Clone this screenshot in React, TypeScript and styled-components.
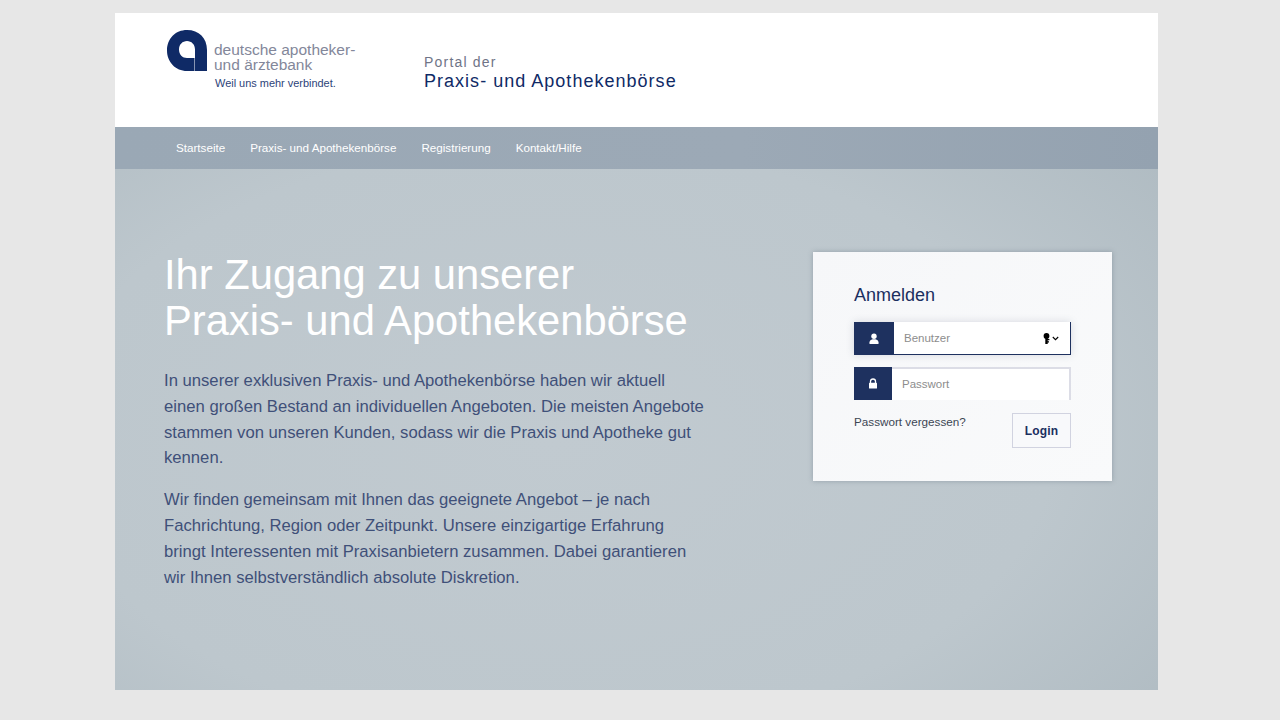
import React from "react";
import styled, { createGlobalStyle } from "styled-components";

const GlobalStyle = createGlobalStyle`
  html, body {
    margin: 0;
    padding: 0;
    background: #e7e7e7;
    font-family: "Liberation Sans", Arial, sans-serif;
  }
`;

const App = () => (
  <>
    <GlobalStyle />
    <Page>
      <Header>
        <Logo>
          <LogoMark viewBox="0 0 41 41" aria-hidden="true">
            <path
              fillRule="evenodd"
              fill="#0f2a66"
              d="M20 0C32 0 40 8 40 20V41H20C8.500 41 0 32 0 20.500C0 8.500 8.500 0 20 0ZM20 11C15.500 11 12 14.500 12 19.500C12 24.500 15.500 28 20 28H27.500V41H28V19.500C28 14.500 24.500 11 20 11Z"
            />
          </LogoMark>
          <LogoText>
            <BankName>
              deutsche apotheker-
              <br />
              und ärztebank
            </BankName>
            <Claim>Weil uns mehr verbindet.</Claim>
          </LogoText>
        </Logo>
        <PortalTitle>
          <PortalLabel>Portal der</PortalLabel>
          <PortalName>Praxis- und Apothekenbörse</PortalName>
        </PortalTitle>
      </Header>

      <Nav>
        <NavLink>Startseite</NavLink>
        <NavLink>Praxis- und Apothekenbörse</NavLink>
        <NavLink>Registrierung</NavLink>
        <NavLink>Kontakt/Hilfe</NavLink>
      </Nav>

      <Main>
        <Intro>
          <Headline>
            Ihr Zugang zu unserer
            <br />
            Praxis- und Apothekenbörse
          </Headline>
          <Copy>
            In unserer exklusiven Praxis- und Apothekenbörse haben wir aktuell
            <br />
            einen großen Bestand an individuellen Angeboten. Die meisten Angebote
            <br />
            stammen von unseren Kunden, sodass wir die Praxis und Apotheke gut
            <br />
            kennen.
          </Copy>
          <Copy>
            Wir finden gemeinsam mit Ihnen das geeignete Angebot – je nach
            <br />
            Fachrichtung, Region oder Zeitpunkt. Unsere einzigartige Erfahrung
            <br />
            bringt Interessenten mit Praxisanbietern zusammen. Dabei garantieren
            <br />
            wir Ihnen selbstverständlich absolute Diskretion.
          </Copy>
        </Intro>

        <LoginCard>
          <CardTitle>Anmelden</CardTitle>
          <UserField>
            <FieldIcon $wide>
              <svg width="12" height="12" viewBox="0 0 12 12" aria-hidden="true">
                <circle cx="6" cy="3.200" r="2.700" fill="#fff" />
                <path d="M1.500 11V9.300C1.500 7.600 3 6.600 4.500 6.200H7.500C9 6.600 10.500 7.600 10.500 9.300V11Z" fill="#fff" />
              </svg>
            </FieldIcon>
            <FieldInput placeholder="Benutzer" readOnly />
            <KeyMenu>
              <svg width="8" height="11" viewBox="0 0 8 11" aria-hidden="true">
                <circle cx="3.500" cy="2.900" r="2.900" fill="#000" />
                <path d="M2.300 4H4.700V6H6.400V7.300H4.700V8.200H6V9.400H4.700V11H2.300Z" fill="#000" />
              </svg>
              <svg width="7" height="5" viewBox="0 0 7 5" aria-hidden="true">
                <path d="M.8 1L3.500 3.700L6.200 1" fill="none" stroke="#000" strokeWidth="1.100" />
              </svg>
            </KeyMenu>
          </UserField>
          <PasswordField>
            <FieldIcon>
              <svg width="10" height="11" viewBox="0 0 10 11" aria-hidden="true">
                <path d="M2.500 5V3.300C2.500 1.800 3.500 1 5 1S7.500 1.800 7.500 3.300V5" fill="none" stroke="#fff" strokeWidth="1.300" />
                <rect x="1" y="4.800" width="8" height="5.700" rx=".6" fill="#fff" />
              </svg>
            </FieldIcon>
            <FieldInput $lift placeholder="Passwort" readOnly />
          </PasswordField>
          <CardFooter>
            <Forgot>Passwort vergessen?</Forgot>
            <LoginButton>Login</LoginButton>
          </CardFooter>
        </LoginCard>
      </Main>
    </Page>
  </>
);

export default App;

const Page = styled.div`
  width: 1043px;
  height: 677px;
  margin: 13px 0 0 115px;
  display: flex;
  flex-direction: column;
`;

const Header = styled.header`
  height: 114px;
  flex: none;
  background: #fff;
  display: flex;
  align-items: flex-start;
  padding-left: 52px;
`;

const Logo = styled.div`
  width: 257px;
  display: flex;
  align-items: flex-start;
  padding-top: 17px;
`;

const LogoMark = styled.svg`
  width: 41px;
  height: 41px;
  flex: none;
`;

const LogoText = styled.div`
  margin: 12px 0 0 6px;
`;

const BankName = styled.div`
  font-size: 15.500px;
  line-height: 15px;
  color: #83879a;
  white-space: nowrap;
`;

const Claim = styled.div`
  margin: 5px 0 0 1px;
  font-size: 10.950px;
  line-height: 12px;
  color: #2c4379;
  white-space: nowrap;
`;

const PortalTitle = styled.div`
  padding-top: 41px;
`;

const PortalLabel = styled.div`
  font-size: 14px;
  line-height: 17px;
  letter-spacing: 1.2px;
  color: #6f7487;
`;

const PortalName = styled.div`
  font-size: 18px;
  line-height: 21px;
  letter-spacing: 1.02px;
  color: #0f2a66;
  white-space: nowrap;
`;

const Nav = styled.nav`
  height: 42px;
  flex: none;
  box-sizing: border-box;
  display: flex;
  align-items: center;
  gap: 25px;
  padding: 0 0 1px 61px;
  background: linear-gradient(90deg, #9aa8b5 0%, #9ca9b6 60%, #94a2b0 100%);
`;

const NavLink = styled.a`
  font-size: 11.650px;
  color: #fff;
  white-space: nowrap;
`;

const Main = styled.main`
  flex: 1;
  display: flex;
  align-items: flex-start;
  justify-content: space-between;
  padding: 83px 46px 0 49px;
  background: radial-gradient(ellipse 80% 95% at 42% 52%, #c1cad0 0%, #bdc7cd 60%, #adb9c0 100%);
`;

const Intro = styled.section`
  width: 560px;
`;

const Headline = styled.h1`
  margin: 0 0 25px;
  font-size: 41.700px;
  font-weight: 400;
  line-height: 45.500px;
  color: #fff;
  white-space: nowrap;
`;

const Copy = styled.p`
  margin: 0 0 16px;
  font-size: 16.670px;
  line-height: 25.800px;
  color: #3f5079;
  white-space: nowrap;
`;

const LoginCard = styled.section`
  width: 299px;
  height: 229px;
  box-sizing: border-box;
  padding: 32px 41px 0;
  background: linear-gradient(135deg, #f6f7f9 0%, #f9fafb 100%);
  box-shadow: 0 0 5px rgba(70, 85, 100, 0.35);
`;

const CardTitle = styled.h2`
  margin: 0 0 16px;
  font-size: 18px;
  font-weight: 400;
  line-height: 22px;
  color: #1b2f5f;
`;

const FieldRow = styled.div`
  position: relative;
  height: 33px;
  display: flex;
  background: #fff;
  box-sizing: border-box;
`;

const UserField = styled(FieldRow)`
  border-right: 1px solid #1e315f;
  border-bottom: 1px solid #1e315f;
  box-shadow: 0 0 8px rgba(60, 70, 100, 0.18);
`;

const PasswordField = styled(FieldRow)`
  margin-top: 12px;
  border-top: 2px solid #dcdde6;
  border-right: 2px solid #dcdde6;
`;

const FieldIcon = styled.div<{ $wide?: boolean }>`
  width: ${(p) => (p.$wide ? 40 : 38)}px;
  flex: none;
  margin-top: ${(p) => (p.$wide ? 0 : -2)}px;
  margin-bottom: ${(p) => (p.$wide ? -1 : 0)}px;
  display: flex;
  align-items: center;
  justify-content: center;
  background: #1e315f;
`;

const FieldInput = styled.input<{ $lift?: boolean }>`
  flex: 1;
  min-width: 0;
  padding: 0 0 ${(p) => (p.$lift ? 2 : 0)}px 10px;
  border: 0;
  outline: 0;
  background: transparent;
  font-family: inherit;
  font-size: 11.500px;
  color: #8a8a8a;

  &::placeholder {
    color: #8d8d8d;
    opacity: 1;
  }
`;

const KeyMenu = styled.div`
  position: absolute;
  top: 11px;
  right: 11px;
  display: flex;
  align-items: center;
  gap: 1px;
`;

const CardFooter = styled.div`
  display: flex;
  align-items: flex-start;
  justify-content: space-between;
  margin-top: 13px;
`;

const Forgot = styled.a`
  margin-top: 2px;
  font-size: 11.700px;
  line-height: 14px;
  color: #3c4654;
`;

const LoginButton = styled.button`
  width: 59px;
  height: 35px;
  padding: 0;
  border: 1px solid #d1d3e0;
  background: #f8f9fb;
  font-family: inherit;
  font-size: 12px;
  font-weight: 700;
  letter-spacing: 0.2px;
  color: #1b2f5f;
`;
